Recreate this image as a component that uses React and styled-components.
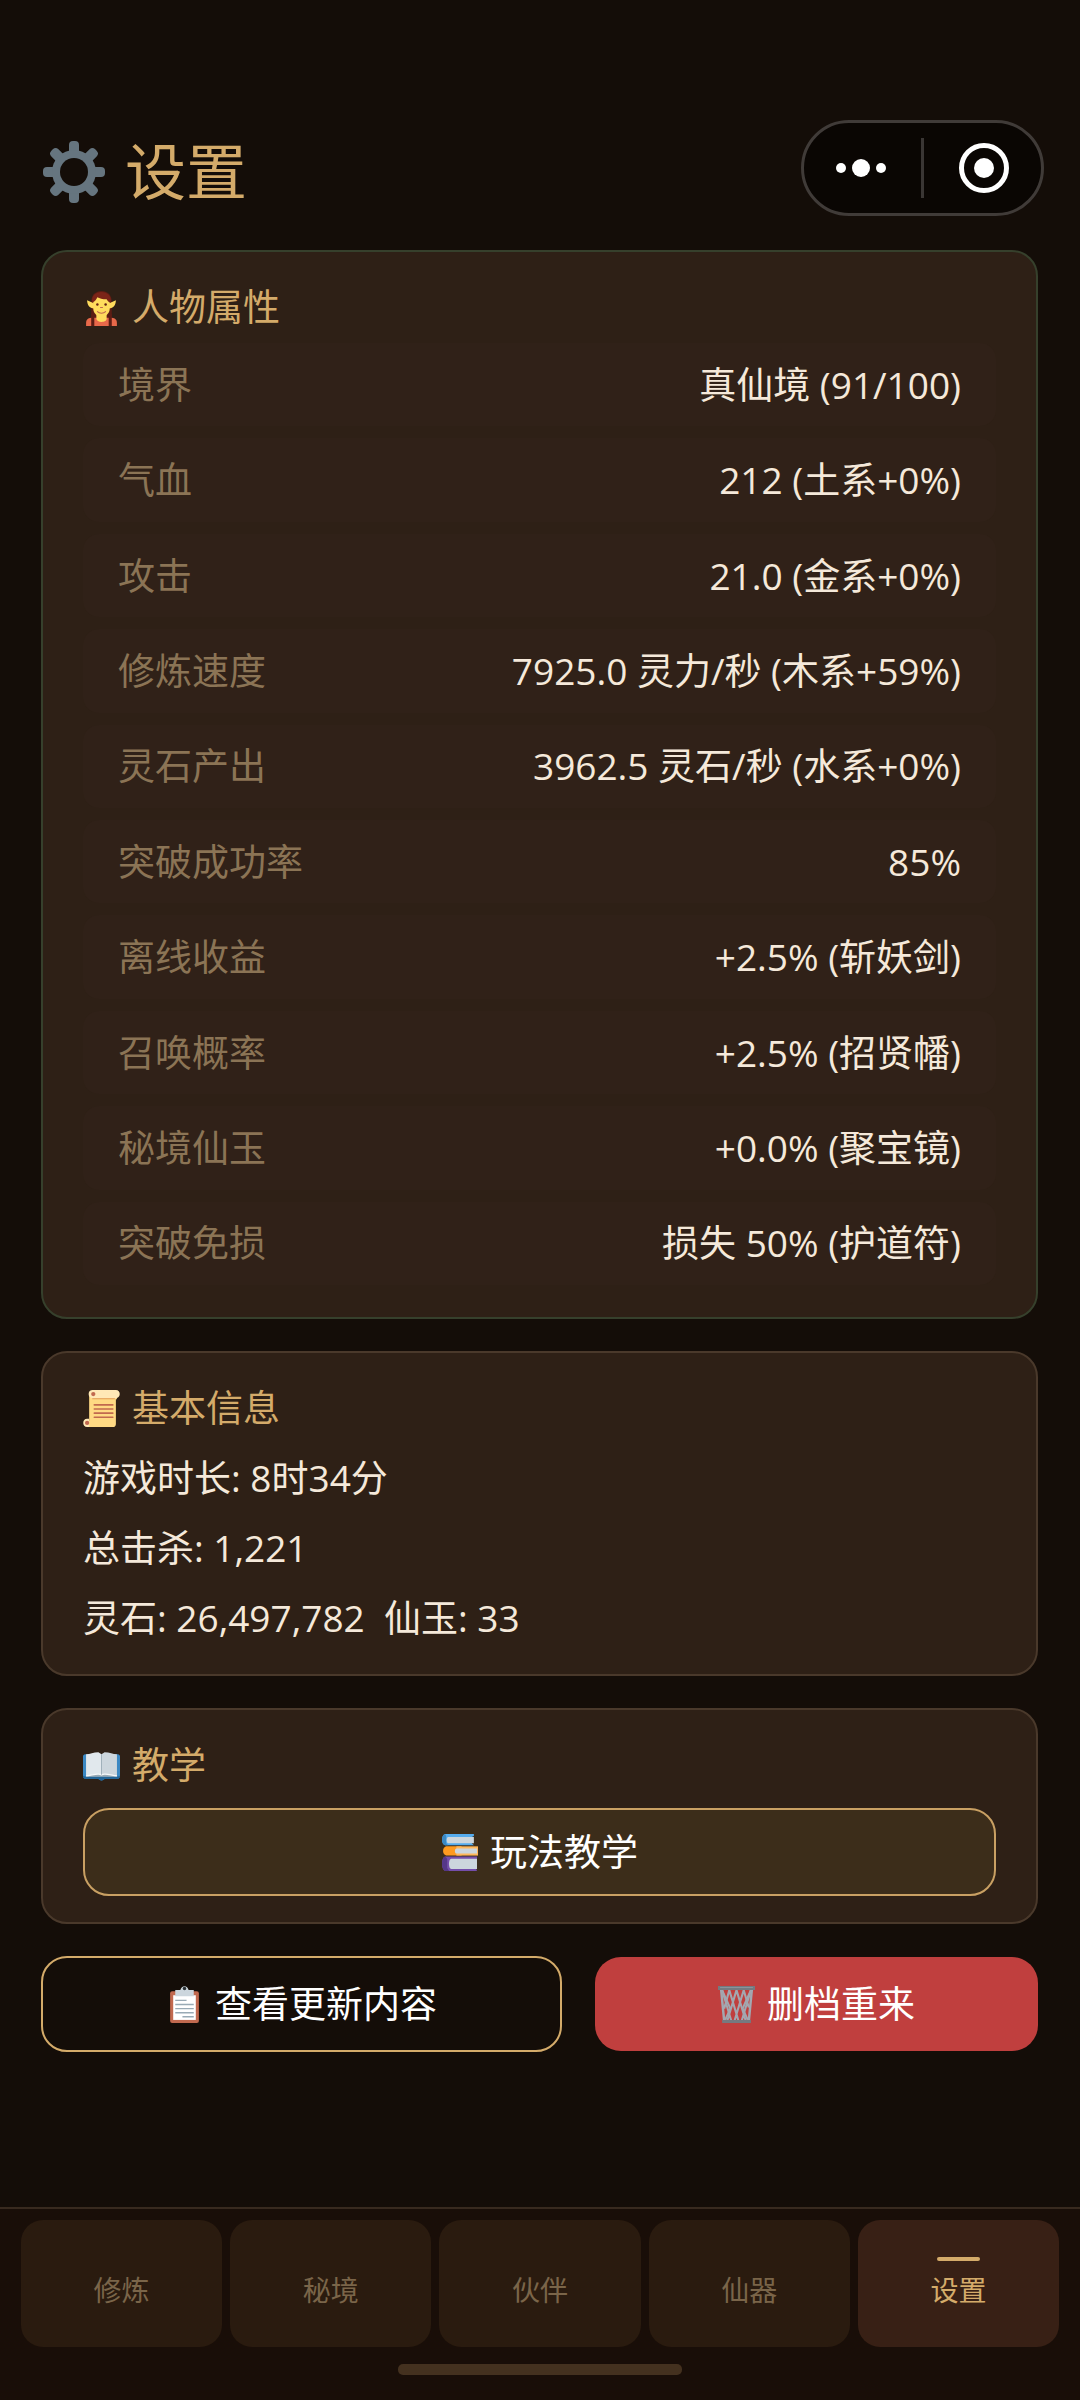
import React from 'react';
import styled, { createGlobalStyle } from 'styled-components';

const COLORS = {
  page: '#140d08',
  bar: '#190e08',
  card: '#2e2016',
  row: '#302118',
  tab: '#2a1b0f',
  tabActive: '#382015',
  gold: '#d4ab6a',
  text: '#f5e9da',
  muted: '#8b7455',
  tabText: '#7a6549',
  jadeBorder: '#36402c',
  brownBorder: '#4a392b',
  danger: '#c03f3e',
};

const ATTRIBUTES = [
  ['境界', '真仙境 (91/100)'],
  ['气血', '212 (土系+0%)'],
  ['攻击', '21.0 (金系+0%)'],
  ['修炼速度', '7925.0 灵力/秒 (木系+59%)'],
  ['灵石产出', '3962.5 灵石/秒 (水系+0%)'],
  ['突破成功率', '85%'],
  ['离线收益', '+2.5% (斩妖剑)'],
  ['召唤概率', '+2.5% (招贤幡)'],
  ['秘境仙玉', '+0.0% (聚宝镜)'],
  ['突破免损', '损失 50% (护道符)'],
];

const TABS = ['修炼', '秘境', '伙伴', '仙器', '设置'];

const GearIcon = () => (
  <TitleIcon viewBox='0 0 62 62' aria-hidden='true'>
    <g fill='#66757f'>
      {[0, 45, 90, 135].map(angle => (
        <rect key={angle} x='26' y='0' width='10' height='62' rx='4' transform={`rotate(${angle} 31 31)`} />
      ))}
      <circle cx='31' cy='31' r='22' />
    </g>
    <circle cx='31' cy='31' r='14' fill={COLORS.page} />
  </TitleIcon>
);

const ElfIcon = () => (
  <Icon viewBox='0 0 36 36' aria-hidden='true'>
    <path fill='#5c1d14' d='M18 2C11 2 8 7 8 13v17h20V13c0-6-3-11-10-11z' />
    <path fill='#e8694a' d='M3 36v-3c0-4 3-5 6-5h18c3 0 6 1 6 5v3z' />
    <path fill='#ffdc5d' d='M13 24h10v5c0 4-10 4-10 0z' />
    <path fill='#5c1d14' d='M8 24h3v12H8zM25 24h3v12h-3z' />
    <path fill='#ffdc5d' d='M11 14l-7-3c0 4 2 8 7 8zM25 14l7-3c0 4-2 8-7 8z' />
    <path fill='#ffdc5d' d='M10 13c0-4 4-6 8-6s8 2 8 6v6c0 5-4 8-8 8s-8-3-8-8z' />
    <path fill='#7b2418' d='M9 13c-1-6 3-10 9-10s10 4 9 10c-2 0-3-1-4-3-4 0-7-1-9-2-1 2-2 4-5 5z' />
    <circle cx='14' cy='15' r='1.2' fill='#662113' />
    <circle cx='22' cy='15' r='1.2' fill='#662113' />
    <path fill='none' stroke='#c1694f' strokeLinecap='round' d='M17 18h2M14 22c2 2 6 2 8 0' />
  </Icon>
);

const ScrollIcon = () => (
  <Icon viewBox='0 0 36 36' aria-hidden='true'>
    <path fill='#ffd983' d='M6 4h27v5h-1v24c0 2-1 3-3 3H4v-6h2z' />
    <path fill='#ffe8b6' d='M9 0h23c5 0 5 8 0 8H9zM4 28h2v8H4c-5 0-5-8 0-8z' />
    <circle cx='9.5' cy='4' r='4' fill='#ffe8b6' />
    <circle cx='10' cy='4' r='2.1' fill='#c1694f' />
    <circle cx='4' cy='32' r='2.1' fill='#c1694f' />
    <path stroke='#e39f5b' d='M9 8.5h22' />
    <path stroke='#c1694f' strokeWidth='1.6' strokeLinecap='round' d='M11 14.500h18M11 18.500h18M11 22.500h18M11 26.500h18' />
  </Icon>
);

const OpenBookIcon = () => (
  <Icon viewBox='0 0 36 36' aria-hidden='true'>
    <path fill='#3b88c3' d='M2 7h32c1 0 2 1 2 2v19c0 2-1 3-3 3H21c-1 2-5 2-6 0H3c-2 0-3-1-3-3V9c0-1 1-2 2-2z' />
    <path fill='#226699' d='M0 28v1c0 1 1 2 3 2h12c1 2 5 2 6 0h12c2 0 3-1 3-3l-3 1H3z' />
    <path fill='#99aab5' d='M3 8h30v21H3z' />
    <path fill='#e1e8ed' d='M3 7c4 0 7-2 12-2l3 2v20c-4-2-10 1-15 1z' />
    <path fill='#ccd6dd' d='M33 7c-4 0-7-2-12-2l-3 2v20c4-2 10 1 15 1z' />
    <path fill='none' stroke='#f5f8fa' strokeWidth='1.4' d='M3 28c5 0 11-3 15-1 4-2 10 1 15 1' />
    <path stroke='#99aab5' strokeWidth='.8' d='M18 7v20' />
  </Icon>
);

const BooksIcon = () => (
  <Icon viewBox='0 0 36 36' aria-hidden='true'>
    <path fill='#55acee' d='M4 0h28v2L30 3v6l2 2H4C0 10 0 1 4 0z' />
    <path fill='#3b88c3' d='M4 0C0 1 0 10 4 11h3L5 9V2z' />
    <path fill='#ccd6dd' d='M7 3h25v6H7C5 9 5 3 7 3z' />
    <path fill='#ff9a1f' d='M5 12h15v9H5c-4-1-4-8 0-9z' />
    <path fill='#ffb85c' d='M15 12h21v9H15z' />
    <path fill='#ccd6dd' d='M15 14h20v5H15c-2 0-2-5 0-5z' />
    <path fill='#744eaa' d='M4 22h31v2l-1 1v8l1 3H4c-4-1-4-13 0-14z' />
    <path fill='#553788' d='M4 22c-4 1-4 13 0 14h4l-2-3v-9z' />
    <path fill='#ccd6dd' d='M10 24h25v10H10c-3 0-3-10 0-10z' />
  </Icon>
);

const ClipboardIcon = () => (
  <Icon viewBox='0 0 36 36' aria-hidden='true'>
    <rect x='4' y='5' width='28' height='31' rx='2' fill='#c1694f' />
    <path fill='#fff' d='M7 9h22v24H7z' />
    <path fill='#ccd6dd' d='M9 4h5c1-5 7-5 8 0h5v6H9z' />
    <circle cx='18' cy='2.5' r='1.7' fill='#292f33' />
    <path stroke='#99aab5' strokeWidth='1.4' d='M9 14h11M9 18h18M9 22h18M9 26h18M16 30h11' />
  </Icon>
);

const TrashIcon = () => (
  <Icon viewBox='0 0 36 36' aria-hidden='true'>
    <g fill='none' stroke='#a3a7b0' strokeWidth='2'>
      <path d='M3 3 6 34M33 3l-3 31' strokeWidth='2.4' />
      <path d='M4 4l9 30M11 4l9 30M18 4l9 30M25 4l5 17M32 4l-9 30M25 4l-9 30M18 4 9 34M11 4 6 22' />
      <path d='M4 4l8 18-5 11M32 4l-8 18 5 11' />
    </g>
    <path fill='#75797f' d='M0 0h36v4H0zM4 33h28v3H4z' />
    <path fill='#8a939a' d='M2 1h32v1H2z' />
  </Icon>
);

const App = () => {
  return (
    <>
      <GlobalStyle />
      <Page>
        <Header>
          <Title>
            <GearIcon />
            设置
          </Title>
          <Capsule>
            <CapsuleButton type='button' aria-label='更多'>
              <svg width='52' height='52' viewBox='0 0 52 52' fill='#fff'>
                <circle cx='6' cy='26' r='5' />
                <circle cx='26' cy='26' r='9' />
                <circle cx='46' cy='26' r='5' />
              </svg>
            </CapsuleButton>
            <CapsuleDivider />
            <CapsuleButton type='button' aria-label='关闭'>
              <svg width='52' height='52' viewBox='0 0 52 52'>
                <circle cx='26' cy='26' r='22.500' fill='none' stroke='#fff' strokeWidth='5' />
                <circle cx='26' cy='26' r='10' fill='#fff' />
              </svg>
            </CapsuleButton>
          </Capsule>
        </Header>

        <Main>
          <Card $border={COLORS.jadeBorder}>
            <CardTitle><ElfIcon />人物属性</CardTitle>
            <AttributeList>
              {ATTRIBUTES.map(([label, value]) => (
                <AttributeRow key={label}>
                  <dt>{label}</dt>
                  <dd>{value}</dd>
                </AttributeRow>
              ))}
            </AttributeList>
          </Card>

          <Card>
            <CardTitle><ScrollIcon />基本信息</CardTitle>
            <InfoList>
              <p>游戏时长: 8时34分</p>
              <p>总击杀: 1,221</p>
              <p>灵石: 26,497,782&nbsp; 仙玉: 33</p>
            </InfoList>
          </Card>

          <Card>
            <CardTitle><OpenBookIcon />教学</CardTitle>
            <TutorialButton type='button'><BooksIcon />玩法教学</TutorialButton>
          </Card>

          <Actions>
            <OutlineButton type='button'><ClipboardIcon />查看更新内容</OutlineButton>
            <DangerButton type='button'><TrashIcon />删档重来</DangerButton>
          </Actions>
        </Main>

        <Footer>
          <TabList>
            {TABS.map(tab => (
              <Tab key={tab} type='button' $active={tab === '设置'}>
                {tab}
              </Tab>
            ))}
          </TabList>
          <HomeIndicator />
        </Footer>
      </Page>
    </>
  );
};

const GlobalStyle = createGlobalStyle`
  *, *::before, *::after {
    box-sizing: border-box;
  }
  body, h1, h2, p, dl, dt, dd {
    margin: 0;
  }
  body {
    background: ${COLORS.page};
    color: ${COLORS.text};
    font-family: 'Open Sans', 'Noto Sans CJK SC', sans-serif;
    font-size: 37px;
    line-height: 44px;
  }
  button {
    font: inherit;
    cursor: pointer;
  }
`;

const Page = styled.div`
  display: flex;
  flex-direction: column;
  min-height: 100vh;
`;

const Header = styled.header`
  display: flex;
  justify-content: space-between;
  align-items: flex-end;
  padding: 120px 36px 34px 43px;
`;

const Title = styled.h1`
  display: flex;
  align-items: center;
  gap: 20px;
  color: ${COLORS.gold};
  font-size: 61px;
  font-weight: 400;
  line-height: 88px;
`;

const TitleIcon = styled.svg`
  width: 62px;
  height: 62px;
`;

const Icon = styled.svg`
  flex: none;
  width: 37px;
  height: 37px;
`;

const Capsule = styled.div`
  display: flex;
  align-items: center;
  width: 243px;
  height: 96px;
  border: 3px solid #403b38;
  border-radius: 48px;
  background: #0a0603;
`;

const CapsuleButton = styled.button`
  flex: 1;
  display: flex;
  justify-content: center;
  padding: 0;
  border: 0;
  background: none;
`;

const CapsuleDivider = styled.div`
  width: 3px;
  height: 60px;
  margin: 0 3px;
  background: #3a3634;
`;

const Main = styled.main`
  flex: 1;
  display: flex;
  flex-direction: column;
  gap: 32px;
  padding: 0 42px 32px 41px;
`;

const Card = styled.section`
  padding: 35px 40px 26px;
  border: 2px solid ${p => p.$border || COLORS.brownBorder};
  border-radius: 26px;
  background: ${COLORS.card};
`;

const CardTitle = styled.h2`
  display: flex;
  align-items: center;
  gap: 12px;
  margin-bottom: 16px;
  color: ${COLORS.gold};
  font-size: 37px;
  font-weight: 400;
  line-height: 40px;
`;

const AttributeList = styled.dl`
  display: flex;
  flex-direction: column;
  gap: 12px;
  min-height: 942px;
  margin-bottom: 6px;
`;

const AttributeRow = styled.div`
  flex: 1;
  display: flex;
  justify-content: space-between;
  align-items: center;
  padding: 0 35px;
  border-radius: 16px;
  background: ${COLORS.row};

  dt {
    color: ${COLORS.muted};
  }
`;

const InfoList = styled.div`
  display: flex;
  flex-direction: column;
  gap: 26px;
  padding: 12px 0 8px;
`;

const BaseButton = styled.button`
  display: flex;
  align-items: center;
  justify-content: center;
  gap: 12px;
  border-radius: 26px;
  color: #fff;
`;

const TutorialButton = styled(BaseButton)`
  width: 100%;
  height: 88px;
  margin-top: 23px;
  border: 2px solid #c9a063;
  background: #3c2d1a;
`;

const Actions = styled.div`
  display: flex;
  align-items: center;
  gap: 33px;
`;

const OutlineButton = styled(BaseButton)`
  flex: 1 1 auto;
  height: 96px;
  border: 2px solid ${COLORS.gold};
  background: transparent;
`;

const DangerButton = styled(BaseButton)`
  flex: 1 1 auto;
  height: 94px;
  border: 0;
  background: ${COLORS.danger};
`;

const Footer = styled.footer`
  padding: 11px 21px 25px;
  border-top: 2px solid #382a1f;
  background: ${COLORS.bar};
`;

const TabList = styled.nav`
  display: grid;
  grid-template-columns: repeat(5, 1fr);
  gap: 8px;
`;

const Tab = styled.button`
  display: flex;
  flex-direction: column;
  align-items: center;
  gap: 13px;
  padding: 37px 0 41px;
  border: 0;
  border-radius: 22px;
  background: ${p => (p.$active ? COLORS.tabActive : COLORS.tab)};
  color: ${p => (p.$active ? COLORS.gold : COLORS.tabText)};
  font-size: 28px;
  line-height: 32px;

  &::before {
    content: '';
    width: 43px;
    height: 4px;
    border-radius: 2px;
    background: ${p => (p.$active ? COLORS.gold : 'transparent')};
  }
`;

const HomeIndicator = styled.div`
  width: 284px;
  height: 11px;
  margin: 17px auto 0;
  border-radius: 5px;
  background: #44311f;
`;

export default App;
